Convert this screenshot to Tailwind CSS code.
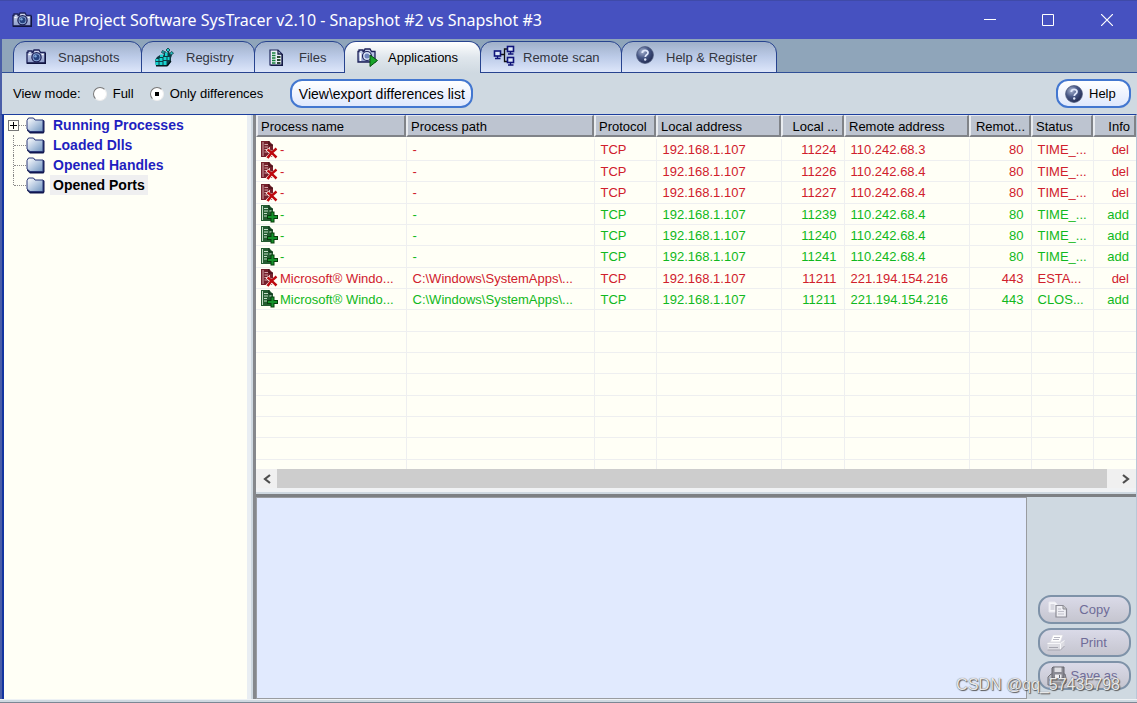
<!DOCTYPE html>
<html lang="en">
<head>
<meta charset="utf-8">
<title>Blue Project Software SysTracer v2.10</title>
<script src="https://cdn.jsdelivr.net/npm/@tailwindcss/browser@4"></script>
</head>
<body class="relative flex h-screen flex-col overflow-hidden bg-[#cfd9e1] font-['Liberation_Sans',Arial,sans-serif] text-[13px] leading-4 text-black">
<svg class="absolute size-0" aria-hidden="true">
  <defs>
    <linearGradient id="gf" x1="0" y1="0" x2="1" y2="1"><stop offset="0" stop-color="#fff"/><stop offset=".5" stop-color="#b9cbe2"/><stop offset="1" stop-color="#6f94bd"/></linearGradient>
    <radialGradient id="gh" cx=".35" cy=".3" r=".75"><stop offset="0" stop-color="#a8b4d0"/><stop offset=".5" stop-color="#465685"/><stop offset="1" stop-color="#202a50"/></radialGradient>
    <linearGradient id="gc" x1="0" y1="0" x2="0" y2="1"><stop offset="0" stop-color="#d5ddf2"/><stop offset="1" stop-color="#8c9bca"/></linearGradient>
  </defs>
  <symbol id="camera" viewBox="0 0 20 16">
    <path d="M1 3.500h1V2h4v1.500h1L8 1h5l1.500 2.500H19V14H1z" fill="url(#gc)" stroke="#1c2158" stroke-width="1.300"/>
    <path d="M1 14.300h18.500V4" fill="none" stroke="#10143f" stroke-width="1.200"/>
    <circle cx="10.500" cy="8.300" r="4.600" fill="#8aa6d6" stroke="#1c2158" stroke-width="1.300"/>
    <circle cx="10.500" cy="8.300" r="3" fill="#26427f"/><circle cx="9.500" cy="7.300" r="1.200" fill="#7fa8dc"/>
    <path d="M2.500 5.500h2M16 5.500h1.500" stroke="#fff"/>
  </symbol>
  <symbol id="registry" viewBox="0 0 20 20">
    <path d="M1 13l2-3 3-2 3 1 2-5 2 2 2-2 1 3 2 1-1 3v4l-3 4H2z" fill="#0b3b44"/>
    <path d="M1.500 12h3v2h-3zM5.500 11h3v3h-3zM1.500 15h3v3h-3zM5.500 15h3v3h-3zM9.500 14h3v4h-3zM9.500 10h3v3h-3zM6 7.500h3v2.500H6zM11 5.500h2.500V9H11zM13.500 10h2v3h-2z" fill="#19d3cf"/>
    <path d="M14 1l2 2-2 2-2-2zM17.500 4.500l2 1.500-2 2-1.500-1.500zM8.500 3.500l2 1-1 2-2-1z" fill="#22c9c9" stroke="#06323a" stroke-width=".8"/>
    <path d="M2 18.800h11l4-5" stroke="#031317" stroke-width="1.300" fill="none"/>
  </symbol>
  <symbol id="file" viewBox="0 0 14 17">
    <path d="M1 1h8l4 4v11H1z" fill="#e8eef5" stroke="#20285c" stroke-width="1.200"/><path d="M9 1v4h4M13.400 5v11.400H1.500" fill="none" stroke="#151b45" stroke-width="1.300"/>
    <path d="M3 4h3.500M3 6.500h3.500M3 9h3.500M3 11.500h3.500M3 14h3.500" stroke="#15803a" stroke-width="1.500"/><path d="M8 8h3.500M8 11h3.500M8 14h3.500" stroke="#2b4a35" stroke-width="1.800"/>
  </symbol>
  <symbol id="app" viewBox="0 0 21 19">
    <path d="M1 3.500h1V2h4v1.500h1L8 1h5l1.500 2.500H18V14H1z" fill="url(#gc)" stroke="#1c2158" stroke-width="1.300"/>
    <circle cx="10" cy="8" r="4.500" fill="#d5e1f6" stroke="#1c2158" stroke-width="1.200"/><circle cx="10" cy="8" r="2.500" fill="#7086bd"/>
    <path d="M3.500 5v8" stroke="#fff" stroke-width="1.500"/><path d="M13 7l7.500 5.500L13 18.500z" fill="#19a62a" stroke="#08510f"/>
  </symbol>
  <symbol id="net" viewBox="0 0 22 21">
    <path d="M7.500 9.500H11M15 4h-3.500v12.500H15" fill="none" stroke="#111" stroke-width="1.300"/>
    <g fill="#dce7f8" stroke="#10147a" stroke-width="1.600"><rect x="1.500" y="6" width="6" height="5"/><rect x="14.500" y="1.500" width="6" height="5"/><rect x="14.500" y="12.500" width="6" height="5"/></g>
    <path d="M4.500 11v2M2 13.500h5.500M17.500 6.500v2M15 9h5.500M17.500 17.500v2M15 20h5.500" stroke="#10147a" stroke-width="1.300"/>
  </symbol>
  <symbol id="help" viewBox="0 0 18 18">
    <circle cx="9" cy="9" r="8.400" fill="url(#gh)" stroke="#4e5a7d" stroke-width=".8"/>
    <path d="M6.300 7C6.300 3.600 12 3.600 12 6.700c0 2-2.700 2.200-2.700 4.300" fill="none" stroke="#dfe7fa" stroke-width="1.800"/><circle cx="9.200" cy="13.500" r="1.200" fill="#dfe7fa"/>
  </symbol>
  <symbol id="folder" viewBox="0 0 19 17">
    <path d="M1 3.500L2.500 1h5L9 3h8.500l1 1v11l-1 1.500H4l-3-3z" fill="#10174e"/>
    <path d="M1 3.500L2.500 1h5L9 3h8v11.500H4L1 12z" fill="url(#gf)" stroke="#2a3878" stroke-width="1"/>
  </symbol>
  <symbol id="del" viewBox="0 0 18 19">
    <path d="M1 1h8l4 4v12H1z" fill="#74202b"/><path d="M9 1v4h4" fill="none" stroke="#3a0c12"/>
    <path d="M3 2v14M4.500 4.500H8M4.500 7H8M4.500 9.500h3M4.500 12h3" stroke="#d3a6aa" stroke-width="1"/><path d="M9.500 7v2M11 11h1" stroke="#e5bfc2"/>
    <path d="M7 9l9 9M16.500 9l-9.500 9" stroke="#fffff6" stroke-width="3.600"/><path d="M7.500 9.500c3 2 6 5 9 8M16.500 8.500c-4 3-6.500 5.500-9 9.500" stroke="#bd0a0f" stroke-width="2.500" fill="none"/>
  </symbol>
  <symbol id="add" viewBox="0 0 18 19">
    <path d="M1 1h8l4 4v12H1z" fill="#235c30"/><path d="M9 1v4h4" fill="none" stroke="#0a2a12"/>
    <path d="M2.500 2v14M4 4.500h4M4 7h4M4 9.500h3M4 12h3" stroke="#c3dcc6" stroke-width="1"/><path d="M9.500 7h2" stroke="#e4f1e4"/>
    <path d="M12.500 7.500v11M7 13h11" stroke="#063d0b" stroke-width="4"/><path d="M12.500 8.500v9M8 13h9" stroke="#14922a" stroke-width="2"/>
  </symbol>
  <symbol id="copy" viewBox="0 0 20 17">
    <path d="M1 1h6l2 2v8H1z" fill="#f6f6fa" stroke="#e9e9f0"/><path d="M2.500 4h4M2.500 6h4M2.500 8h4" stroke="#b9b9c6"/>
    <path d="M8 4.500h7l3.500 3.500v8H8z" fill="#efeff4" stroke="#8b8b95" stroke-width="1.200"/><path d="M15 4.500V8h3.500" fill="#ccc" stroke="#8b8b95"/><path d="M10 8h3M10 10.500h6M10 13h6" stroke="#bfbfca"/>
  </symbol>
  <symbol id="print" viewBox="0 0 20 17">
    <path d="M7 1h10l-3 8H4z" fill="#fff" stroke="#d8d8df" stroke-width=".7"/><path d="M8 3.500h6M7 5.500h6" stroke="#b7b7c2"/>
    <path d="M1.500 9L4 7.500h12l2.500-1V12l-4 4h-13z" fill="#dcdce2"/><path d="M1.500 9.500h13l4-3M14.500 10v6" fill="none" stroke="#f8f8fb"/><path d="M3 13.500h9M1.500 16h13l4-4" fill="none" stroke="#a5a5af"/>
  </symbol>
  <symbol id="save" viewBox="0 0 20 20">
    <path d="M1 11l3-3h14l1 4v5l-3 2H1z" fill="#b8b8be" stroke="#6f6f78"/><path d="M2 14h14l2-2M3 17h11" stroke="#77777f" fill="none"/>
    <path d="M6 1h11v11H5V2z" fill="#8a8a93" stroke="#66666f"/><path d="M7.500 1.500h7V6h-7z" fill="#dedee3"/><path d="M8 8.500h6.500V12H8z" fill="#f0f0f3"/><path d="M12.500 9v3" stroke="#66666f"/>
  </symbol>
</svg>

<header class="flex h-[39px] shrink-0 items-center border-t border-[#3f4aa8] bg-[#4651c0] pl-3 text-white">
  <svg class="h-4 w-5"><use href="#camera"/></svg>
  <h1 class="ml-1 flex-1 font-['Noto_Sans','Open_Sans',sans-serif] text-base leading-5 whitespace-nowrap">Blue Project Software SysTracer v2.10 - Snapshot #2 vs Snapshot #3</h1>
  <button aria-label="Minimize" class="flex h-full w-[58px] items-center justify-center"><svg class="size-3" viewBox="0 0 12 12"><path d="M0 5.500h12" stroke="#fff"/></svg></button>
  <button aria-label="Maximize" class="flex h-full w-[58px] items-center justify-center"><svg class="size-3" viewBox="0 0 12 12"><path d="M.5.5h11v11H.5z" fill="none" stroke="#fff"/></svg></button>
  <button aria-label="Close" class="flex h-full w-[60px] items-center justify-center"><svg class="size-3" viewBox="0 0 12 12"><path d="M0 0l12 12M12 0L0 12" stroke="#fff" stroke-width="1.200"/></svg></button>
</header>

<nav class="flex h-[34px] shrink-0 border-l-2 border-[#4a5ea8] bg-[#8fa5ba] pt-0.5 pl-[11px] shadow-[inset_0_-1px_0_#2f4f96]">
  <button class="flex w-[129px] items-center rounded-t-xl border border-[#27438f] bg-linear-to-b from-[#a0b0c9] via-[#bccbe8] to-[#dde6fa] pl-3 text-[#33363f]"><svg class="h-4 w-5"><use href="#camera"/></svg><span class="ml-3 pt-0.5">Snapshots</span></button>
  <button class="-ml-px flex w-[114px] items-center rounded-t-xl border border-[#27438f] bg-linear-to-b from-[#a0b0c9] via-[#bccbe8] to-[#dde6fa] pl-3 text-[#33363f]"><svg class="size-5"><use href="#registry"/></svg><span class="ml-3 pt-0.5">Registry</span></button>
  <button class="-ml-px flex w-[91px] items-center rounded-t-xl border border-[#27438f] bg-linear-to-b from-[#a0b0c9] via-[#bccbe8] to-[#dde6fa] pl-3.5 text-[#33363f]"><svg class="h-[17px] w-3.5"><use href="#file"/></svg><span class="ml-4 pt-0.5">Files</span></button>
  <button class="-ml-px flex w-[137px] items-center rounded-t-xl border border-b-0 border-[#27438f] bg-linear-to-b from-white via-[#dfe6ec] to-[#cfd9e1] pl-3 text-black"><svg class="h-[19px] w-[21px]"><use href="#app"/></svg><span class="ml-2.5">Applications</span></button>
  <button class="-ml-px flex w-[142px] items-center rounded-t-xl border border-[#27438f] bg-linear-to-b from-[#a0b0c9] via-[#bccbe8] to-[#dde6fa] pl-3 text-[#33363f]"><svg class="mb-1 h-[21px] w-[22px]"><use href="#net"/></svg><span class="ml-2 pt-0.5">Remote scan</span></button>
  <button class="-ml-px flex w-[156px] items-center rounded-t-xl border border-[#27438f] bg-linear-to-b from-[#a0b0c9] via-[#bccbe8] to-[#dde6fa] pl-3.5 text-[#33363f]"><svg class="mb-1 size-[18px]"><use href="#help"/></svg><span class="ml-3 pt-0.5">Help &amp; Register</span></button>
</nav>

<section class="flex h-[41px] shrink-0 items-center border-l-2 border-[#4a5ea8] pr-1.5 pl-[11px]">
  <span>View mode:</span>
  <label class="ml-3 flex items-center gap-1.5"><input type="radio" name="mode" class="size-3.5 appearance-none rounded-full border border-t-[#777] border-r-[#eee] border-b-[#eee] border-l-[#777] bg-white">Full</label>
  <label class="ml-4 flex items-center gap-1.5"><input type="radio" name="mode" checked class="size-3.5 appearance-none rounded-full border border-t-[#777] border-r-[#eee] border-b-[#eee] border-l-[#777] bg-white bg-radial from-black from-25% to-white to-30%">Only differences</label>
  <button class="ml-[27px] h-[29px] w-[183px] rounded-xl border-2 border-[#4377d0] bg-linear-to-b from-white to-[#dfe8fd] text-sm leading-4 whitespace-nowrap">View\export differences list</button>
  <button class="ml-auto flex h-[29px] w-[75px] items-center rounded-xl border-2 border-[#4377d0] bg-linear-to-b from-white to-[#dfe8fd] pl-[7px]"><svg class="size-[18px]"><use href="#help"/></svg><span class="ml-1.5">Help</span></button>
</section>

<main class="flex min-h-0 flex-1 border-t border-r border-l-2 border-t-[#1d3f9e] border-r-[#b8c8d8] border-l-[#4a5ea8]">
  <aside class="w-[249px] shrink-0 border-l-2 border-l-[#1335a0] border-r-4 border-r-[#e9eef3] bg-[#fffff6]">
    <ul class="pl-1 text-sm leading-5 font-bold text-[#1f1fc0]">
      <li class="flex h-5 items-center"><span class="flex size-[11px] items-center justify-center border border-[#777]"><svg class="size-[7px]" viewBox="0 0 7 7"><path d="M0 3.500h7M3.500 0v7" stroke="#000"/></svg></span><i class="w-[7px] border-t border-dotted border-[#888]"></i><svg class="h-[17px] w-[19px]"><use href="#folder"/></svg><a href="#" class="ml-2">Running Processes</a></li>
      <li class="flex h-5 items-center pl-[5px]"><i class="h-5 border-l border-dotted border-[#888]"></i><i class="w-3 border-t border-dotted border-[#888]"></i><svg class="h-[17px] w-[19px]"><use href="#folder"/></svg><a href="#" class="ml-2">Loaded Dlls</a></li>
      <li class="flex h-5 items-center pl-[5px]"><i class="h-5 border-l border-dotted border-[#888]"></i><i class="w-3 border-t border-dotted border-[#888]"></i><svg class="h-[17px] w-[19px]"><use href="#folder"/></svg><a href="#" class="ml-2">Opened Handles</a></li>
      <li class="flex h-5 items-center pl-[5px]"><i class="mb-2.5 h-2.5 border-l border-dotted border-[#888]"></i><i class="w-3 border-t border-dotted border-[#888]"></i><svg class="h-[17px] w-[19px]"><use href="#folder"/></svg><a href="#" class="ml-[5px] bg-[#efeff0] px-[3px] text-black">Opened Ports</a></li>
    </ul>
  </aside>
  <div class="ml-0.5 flex min-w-0 flex-1 flex-col border-l-[3px] border-[#85888c]">
    <div class="h-[354px] shrink-0 overflow-hidden bg-[#fffff6]">
      <table class="w-full table-fixed border-collapse">
        <colgroup><col class="w-[150px]"><col class="w-[188px]"><col class="w-[62px]"><col class="w-[125px]"><col class="w-[63px]"><col class="w-[125px]"><col class="w-[62px]"><col class="w-[62px]"><col></colgroup>
        <thead><tr id="head" class="h-6"></tr></thead>
        <tbody id="rows" class="[&>tr]:h-[21px] [&>tr:nth-child(3n)]:h-[22px]"></tbody>
      </table>
    </div>
    <div class="flex h-[19px] shrink-0 bg-[#f0f0f0]">
      <button aria-label="Scroll left" class="flex w-[21px] items-center justify-center"><svg class="size-2.5" viewBox="0 0 10 10"><path d="M8 1L3 5l5 4" fill="none" stroke="#4d4d4d" stroke-width="2.200"/></svg></button>
      <div class="flex-1 bg-[#cdcdcd]"></div>
      <button aria-label="Scroll right" class="flex w-[29px] items-center justify-center pl-2"><svg class="size-2.5" viewBox="0 0 10 10"><path d="M2 1l5 4-5 4" fill="none" stroke="#4d4d4d" stroke-width="2.200"/></svg></button>
    </div>
    <div class="h-[9px] shrink-0 border-t-4 border-b-[3px] border-t-[#f0f2f4] border-b-[#7d8083] bg-[#cfd9e1]"></div>
    <div class="flex min-h-0 flex-1">
      <textarea readonly aria-label="Details" class="min-w-0 flex-1 resize-none border border-[#999ca0] bg-[#e1eafe] outline-none"></textarea>
      <div class="flex w-[109px] shrink-0 flex-col items-end justify-end gap-1 pr-[5px] pb-[9px] text-[#6f6c98]">
        <button class="flex h-[29px] w-[93px] items-center rounded-[13px] border-2 border-[#7e92a8] bg-linear-to-b from-[#dadae8] to-[#c5c5cf] pl-2"><svg class="h-[17px] w-5"><use href="#copy"/></svg><span class="flex-1 pr-2">Copy</span></button>
        <button class="flex h-[29px] w-[93px] items-center rounded-[13px] border-2 border-[#7e92a8] bg-linear-to-b from-[#dadae8] to-[#c5c5cf] pl-1.5"><svg class="h-[17px] w-5"><use href="#print"/></svg><span class="flex-1 pr-2">Print</span></button>
        <button class="flex h-[29px] w-[93px] items-center rounded-[13px] border-2 border-[#7e92a8] bg-linear-to-b from-[#dadae8] to-[#c5c5cf] pl-[7px]"><svg class="size-5"><use href="#save"/></svg><span class="flex-1 pr-2 whitespace-nowrap">Save as</span></button>
      </div>
    </div>
  </div>
</main>
<footer class="h-1 shrink-0 border-t border-b border-t-[#eef2f5] border-b-[#7b8794] bg-[#cfd9e1]"></footer>
<p class="absolute right-[17px] bottom-2 text-base leading-5 text-[#e8e8e8] [text-shadow:1px_1px_1px_#555,0_0_1px_#666]">CSDN @qq_57435798</p>

<script>
const cols = ['Process name','Process path','Protocol','Local address','Local ...','Remote address','Remot...','Status','Info'];
const right = [4, 6, 8];
document.getElementById('head').innerHTML = cols.map((c, i) =>
  `<th class="p-0 pb-0.5 font-normal"><div class="h-[22px] border-t border-r-2 border-b-2 border-l-2 border-t-[#e4e8ee] border-r-[#808388] border-b-[#808388] border-l-[#e9ecf0] bg-[#bdc4d0] pt-[3px] pl-[3px] whitespace-nowrap ${right.includes(i) ? 'pr-1 text-right' : 'text-left'}">${c}</div></th>`).join('');
const ms = 'Microsoft® Windo...', sp = 'C:\\Windows\\SystemApps\\...';
const data = [
  ['-','-','11224','110.242.68.3','80','TIME_...','del'],
  ['-','-','11226','110.242.68.4','80','TIME_...','del'],
  ['-','-','11227','110.242.68.4','80','TIME_...','del'],
  ['-','-','11239','110.242.68.4','80','TIME_...','add'],
  ['-','-','11240','110.242.68.4','80','TIME_...','add'],
  ['-','-','11241','110.242.68.4','80','TIME_...','add'],
  [ms,sp,'11211','221.194.154.216','443','ESTA...','del'],
  [ms,sp,'11211','221.194.154.216','443','CLOS...','add'],
  ...Array(8).fill(null)
];
document.getElementById('rows').innerHTML = data.map(r => {
  const cells = r ? [r[0], r[1], 'TCP', '192.168.1.107', ...r.slice(2)] : Array(9).fill('');
  const color = r && r[6] === 'del' ? 'text-[#d0202c]' : 'text-[#10b820]';
  return `<tr class="${color}">` + cells.map((c, i) => {
    const icon = r && i === 0 ? `<svg class="h-[19px] w-[18px] shrink-0"><use href="#${r[6]}"/></svg>` : '';
    const cls = i === 0 ? 'gap-0.5 pl-1' : right.includes(i) ? 'justify-end pr-[7px]' : 'pl-1.5';
    return `<td class="border-r border-b border-[#eeeff0] p-0 last:border-r-0"><div class="flex h-5 items-center whitespace-nowrap ${cls}">${icon}<span class="pt-0.5">${c}</span></div></td>`;
  }).join('') + '</tr>';
}).join('');
</script>
</body>
</html>
